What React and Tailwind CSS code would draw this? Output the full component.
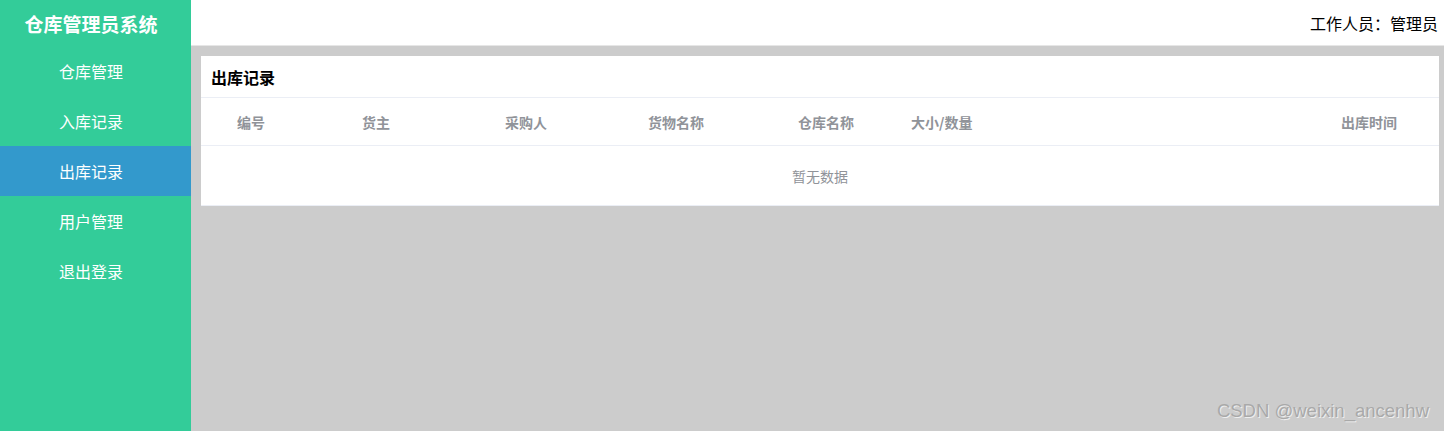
const menuItems = [
  { id: "warehouse", name: "仓库管理" },
  { id: "inbound", name: "入库记录" },
  { id: "outbound", name: "出库记录" },
  { id: "users", name: "用户管理" },
  { id: "logout", name: "退出登录" },
];

const columns = [
  { id: "no", title: "编号", align: "center" },
  { id: "owner", title: "货主", align: "center" },
  { id: "buyer", title: "采购人", align: "center" },
  { id: "goods", title: "货物名称", align: "center" },
  { id: "house", title: "仓库名称", align: "center" },
  { id: "size", title: "大小/数量", align: "left" },
  { id: "time", title: "出库时间", align: "center" },
];

export default function App() {
  return (
    <div
      className="relative flex h-screen w-full overflow-hidden bg-[#cccccc]"
      style={{ fontFamily: '"Noto Sans CJK SC", "Noto Sans", sans-serif' }}
    >
      <Sidebar active="outbound" />
      <div className="flex flex-1 flex-col">
        <TopBar />
        <div className="pl-[10px] pr-[5px] pt-[10px]">
          <OutboundCard />
        </div>
      </div>
      <Watermark />
    </div>
  );
}

function Sidebar({ active }) {
  return (
    <div className="flex h-full w-[191px] shrink-0 flex-col bg-[#33cc99] text-white">
      <div className="flex h-[46px] w-[182px] items-center justify-center text-[19px] font-bold leading-none">
        仓库管理员系统
      </div>
      {menuItems.map((x) => (
        <div
          key={x.id}
          className={
            x.id === active
              ? "flex h-[50px] items-center bg-[#3399cc]"
              : "flex h-[50px] items-center"
          }
        >
          <span className="w-[182px] text-center text-[16px] leading-none">
            {x.name}
          </span>
        </div>
      ))}
    </div>
  );
}

function TopBar() {
  return (
    <div className="flex h-[46px] shrink-0 items-center justify-end border-b border-[#e6e6e6] bg-white pr-[6px] text-[16px] leading-none text-black">
      工作人员：管理员
    </div>
  );
}

function OutboundCard() {
  return (
    <div className="bg-white">
      <div className="flex h-[42px] items-center border-b border-[#ebeef5] pl-[10px] text-[16px] font-bold leading-none text-black">
        出库记录
      </div>
      <div className="grid h-[48px] grid-cols-[100px_150px_150px_150px_150px_1fr_140px] items-center border-b border-[#ebeef5] text-[14px] font-bold leading-none text-[#909399]">
        {columns.map((c) => (
          <div
            key={c.id}
            className={c.align === "left" ? "pl-[10px] text-left" : "text-center"}
          >
            {c.title}
          </div>
        ))}
      </div>
      <div className="flex h-[60px] items-center justify-center border-b border-[#ebeef5] text-[14px] leading-none text-[#909399]">
        暂无数据
      </div>
    </div>
  );
}

function Watermark() {
  return (
    <div
      className="pointer-events-none absolute bottom-[11px] right-[15px] text-[18.5px] leading-none text-[#a9a9a9] [text-shadow:1px_1px_0_#eeeeee]"
      style={{ fontFamily: '"Liberation Sans", Arial, sans-serif' }}
    >
      CSDN @weixin_ancenhw
    </div>
  );
}
